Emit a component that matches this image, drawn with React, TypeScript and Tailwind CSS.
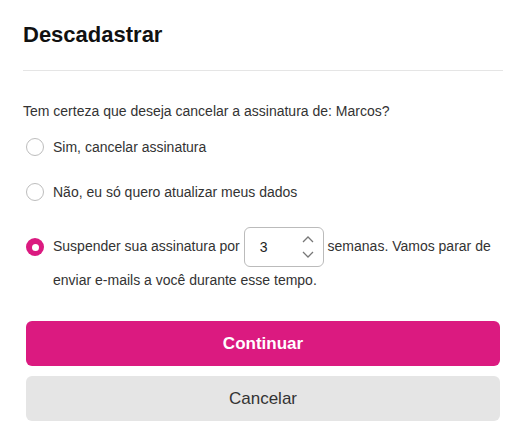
import { useState } from "react";

function Radio({ checked, onClick }: { checked: boolean; onClick: () => void }) {
  return (
    <button
      type="button"
      onClick={onClick}
      className={
        checked
          ? "flex size-[18px] shrink-0 items-center justify-center rounded-full bg-[#db1a80]"
          : "size-[18px] shrink-0 rounded-full border border-[#bdbdbd] bg-white"
      }
    >
      {checked && <span className="size-[7px] rounded-full bg-white" />}
    </button>
  );
}

export default function App() {
  const [choice, setChoice] = useState(2);
  const [weeks, setWeeks] = useState(3);

  return (
    <div className="w-[520px] bg-white pl-[23px] pr-[17px] pt-[20px] font-['Liberation_Sans',Arial,sans-serif] text-[#333]">
      <h1 className="text-[22px] font-bold leading-[30px] text-[#111]">Descadastrar</h1>
      <div className="mt-[20px] h-px bg-[#e5e5e5]" />

      <p className="mt-[30px] text-[14px] leading-[20px]">
        Tem certeza que deseja cancelar a assinatura de: Marcos?
      </p>

      <div className="mt-[14px] flex flex-col">
        <label className="flex h-6 items-center gap-[9px] pl-[3px]">
          <Radio checked={choice === 0} onClick={() => setChoice(0)} />
          <span className="text-[14px]">Sim, cancelar assinatura</span>
        </label>
        <label className="mt-[21px] flex h-6 items-center gap-[9px] pl-[3px]">
          <Radio checked={choice === 1} onClick={() => setChoice(1)} />
          <span className="text-[14px]">Não, eu só quero atualizar meus dados</span>
        </label>
        <div className="mt-[23px] flex items-start gap-[9px] pl-[3px]">
          <div className="flex h-[40px] items-center">
            <Radio checked={choice === 2} onClick={() => setChoice(2)} />
          </div>
          <p className="text-[14px] leading-[26px]">
            Suspender sua assinatura por{" "}
            <span className="inline-flex h-[40px] w-[80px] items-center justify-between rounded-md border border-[#bbb] pl-[15px] pr-[8px] align-middle">
              <span className="text-[14px] text-[#222]">{weeks}</span>
              <span className="flex flex-col text-[#777]">
                <svg width="14" height="10" viewBox="0 0 14 10" onClick={() => setWeeks(weeks + 1)}>
                  <path d="M2 7 L7 2 L12 7" fill="none" stroke="currentColor" strokeWidth="1.3" />
                </svg>
                <svg width="14" height="10" viewBox="0 0 14 10" className="mt-[4px]" onClick={() => setWeeks(Math.max(1, weeks - 1))}>
                  <path d="M2 3 L7 8 L12 3" fill="none" stroke="currentColor" strokeWidth="1.3" />
                </svg>
              </span>
            </span>{" "}
            semanas. Vamos parar de enviar e-mails a você durante esse tempo.
          </p>
        </div>
      </div>

      <div className="mx-[3px] mt-[28px] flex flex-col gap-[10px] pb-[16px]">
        <button className="h-[45px] rounded-md bg-[#db1a80] text-[17px] font-bold text-white">
          Continuar
        </button>
        <button className="h-[45px] rounded-md bg-[#e5e5e5] text-[17px] text-[#333]">
          Cancelar
        </button>
      </div>
    </div>
  );
}
